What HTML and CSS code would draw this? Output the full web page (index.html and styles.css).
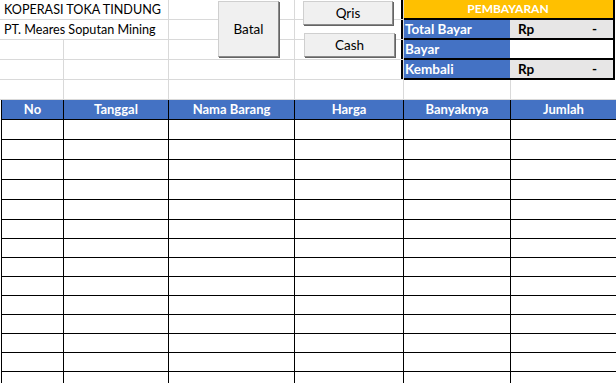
FILE: index.html
```html
<!DOCTYPE html>
<html lang="en">
<head>
    <meta charset="UTF-8">
    <meta name="viewport" content="width=device-width, initial-scale=1.0">
    <title>Kasir - Koperasi Toka Tindung</title>
    <link rel="stylesheet" href="styles.css">
    <script>
        const ROW_COUNT = 16;

        function buildRows() {
            const body = document.getElementById('sales-body');
            for (let i = 0; i < ROW_COUNT; i++) {
                const row = document.createElement('div');
                // first rows are a bit taller, like the sheet
                row.className = i < 5 ? 'row' : 'row short';
                row.innerHTML = '<div></div><div></div><div></div><div></div><div></div><div></div>';
                body.appendChild(row);
            }
        }

        document.addEventListener('DOMContentLoaded', buildRows);
    </script>
</head>
<body>
    <div class="sheet">
        <!-- Top area: titles, buttons, payment box -->
        <div class="top">
            <div class="pay">
                <div class="pay-head">PEMBAYARAN</div>
                <div class="pay-row">
                    <div class="pay-label">Total Bayar</div>
                    <div class="pay-value"><span>Rp</span><span>-</span></div>
                </div>
                <div class="pay-row">
                    <div class="pay-label">Bayar</div>
                    <div class="pay-value input"></div>
                </div>
                <div class="pay-row">
                    <div class="pay-label">Kembali</div>
                    <div class="pay-value"><span>Rp</span><span>-</span></div>
                </div>
            </div>

            <div class="cell title">KOPERASI TOKA TINDUNG</div>
            <div class="cell"></div>
            <div class="cell"></div>

            <div class="cell title">PT. Meares Soputan Mining</div>
            <div class="cell"></div>
            <div class="cell"></div>

            <div class="cell"></div>
            <div class="cell"></div>
            <div class="cell"></div>
            <div class="cell"></div>

            <div class="cell"></div>
            <div class="cell"></div>
            <div class="cell"></div>
            <div class="cell"></div>

            <div class="cell"></div>
            <div class="cell"></div>
            <div class="cell"></div>
            <div class="cell"></div>
            <div class="cell"></div>
            <div class="cell"></div>

            <button class="btn btn-batal">Batal</button>
            <button class="btn btn-qris">Qris</button>
            <button class="btn btn-cash">Cash</button>
        </div>

        <!-- Sales table -->
        <div class="sales">
            <div class="row head">
                <div>No</div>
                <div>Tanggal</div>
                <div>Nama Barang</div>
                <div>Harga</div>
                <div>Banyaknya</div>
                <div>Jumlah</div>
            </div>
            <div id="sales-body"></div>
        </div>
    </div>
</body>
</html>
```

FILE: styles.css
```css
/* General */
body {
    margin: 0;
    padding: 0;
    background-color: #fff;
    color: #000;
    font-family: 'Lato', 'Liberation Sans', sans-serif;
    font-size: 13px;
    overflow: hidden;
}

.sheet {
    width: 617px;
}

/* Top area */
.top {
    position: relative;
    display: grid;
    grid-template-columns: 64px 105px 126px 109px 107px 106px;
    grid-auto-rows: 20px;
}

.cell {
    box-sizing: border-box;
    border-right: 1px solid #d9d9d9;
    border-bottom: 1px solid #d9d9d9;
}

.title {
    grid-column: span 2;
    padding-left: 4px;
    line-height: 19px;
    font-size: 12.6px;
    white-space: nowrap;
}

/* Payment box */
.pay {
    grid-column: 5 / 7;
    grid-row: 1 / 5;
    width: 214px;
    margin-left: -3px;
    box-sizing: border-box;
    border-left: 2px solid #000;
    border-right: 2px solid #000;
    display: flex;
    flex-direction: column;
    font-weight: bold;
    font-size: 13.5px;
}

.pay-head {
    height: 18px;
    border-bottom: 2px solid #000;
    background-color: #ffc000;
    color: #fff;
    text-align: center;
    font-size: 12px;
    line-height: 18px;
}

.pay-row {
    display: flex;
    height: 18px;
    border-bottom: 2px solid #000;
    line-height: 18px;
}

.pay-label {
    width: 107px;
    padding-left: 2px;
    box-sizing: border-box;
    background-color: #4472c4;
    color: #fff;
}

.pay-value {
    flex: 1;
    display: flex;
    justify-content: space-between;
    padding: 0 16px 0 8px;
    background-color: #e7e6e6;
}

.pay-value.input {
    background-color: #fff;
}

/* Buttons */
.btn {
    position: absolute;
    box-sizing: border-box;
    padding: 0;
    background-color: #f0f0f0;
    border: 1px solid #cfcfcf;
    border-right-color: #8a8a8a;
    border-bottom-color: #8a8a8a;
    box-shadow: 1px 1px 0 #646464;
    font-family: inherit;
    font-size: 13.5px;
    color: #000;
}

.btn-batal {
    left: 218px;
    top: 1px;
    width: 61px;
    height: 56px;
}

.btn-qris {
    left: 303px;
    top: 1px;
    width: 90px;
    height: 24px;
}

.btn-cash {
    left: 304px;
    top: 33px;
    width: 91px;
    height: 24px;
}

/* Sales table */
.sales {
    margin-top: -1px;
    margin-left: 1px;
    border-top: 1px solid #000;
    border-left: 1px solid #000;
}

.row {
    display: grid;
    grid-template-columns: 62px 105px 126px 109px 107px 106px;
    height: 20px;
}

.row.short {
    height: 19px;
}

.row > div {
    box-sizing: border-box;
    border-right: 1px solid #000;
    border-bottom: 1px solid #000;
}

.row.head > div {
    background-color: #4472c4;
    color: #fff;
    font-weight: bold;
    text-align: center;
    line-height: 19px;
}
```
